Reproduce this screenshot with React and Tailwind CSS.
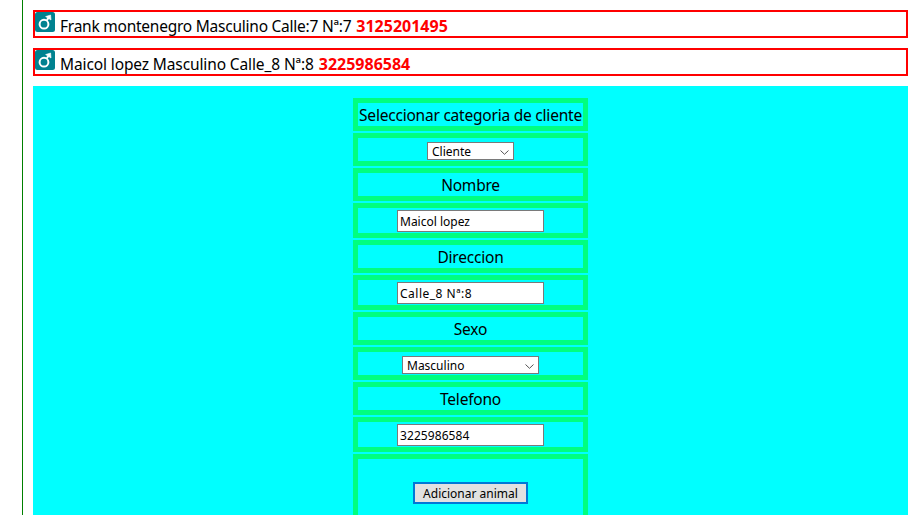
const clients = [
  { info: 'Frank montenegro Masculino Calle:7 Nª:7', phone: '3125201495', tracking: 'tracking-[-0.24px]' },
  { info: 'Maicol lopez Masculino Calle_8 Nª:8', phone: '3225986584', tracking: 'tracking-[-0.12px]' },
];

function MaleIcon() {
  return (
    <svg className="size-5 shrink-0" viewBox="0 0 20 20" fill="none">
      <rect width="20" height="20" rx="2.5" fill="#008290" />
      <circle cx="9" cy="12.2" r="4.4" stroke="white" strokeWidth="2" />
      <path d="M11.8 8.6 13.5 5.8" stroke="white" strokeWidth="2" />
      <path d="M10.6 4.6 15.6 3 16 8Z" fill="white" stroke="white" strokeWidth=".6" />
    </svg>
  );
}

function Client({ info, phone, tracking }) {
  return (
    <div className="flex h-7 border-2 border-[#ff0000] text-[15.5px] leading-[26px] whitespace-pre">
      <MaleIcon />
      <span className={`ml-[5px] pt-px ${tracking}`}>{info}</span>
      <span className="ml-[5px] pt-px text-[16px] font-bold text-[#ff0000]">{phone}</span>
    </div>
  );
}

function Label({ children }) {
  return (
    <div className="flex h-[33px] justify-center border-5 border-[#00ff7f] pt-px text-[15.5px] leading-[23px] tracking-[-0.22px] whitespace-nowrap">
      {children}
    </div>
  );
}

function Field({ value, tracking = 'tracking-normal' }) {
  return (
    <div className="flex h-[35px] justify-center border-5 border-[#00ff7f] pt-0.5">
      <div className={`h-[22px] w-[147px] border border-[#7a7a7a] bg-white pl-0.5 text-[12px] leading-[21px] ${tracking}`}>{value}</div>
    </div>
  );
}

function Select({ value, width }) {
  return (
    <div className="flex h-[33px] justify-center border-5 border-[#00ff7f] pt-1">
      <div className={`flex h-[18px] justify-between border border-[#7a7a7a] bg-white pr-1 pl-1 text-[12px] leading-[18px] ${width}`}>
        <span>{value}</span>
        <svg className="mt-[7px] h-[5px] w-[9px]" viewBox="0 0 9 5" fill="none" stroke="#555">
          <path d="M.5 .5 4.5 4.3 8.5 .5" />
        </svg>
      </div>
    </div>
  );
}

export default function App() {
  return (
    <div className="flex h-[515px] w-[917px] overflow-hidden bg-white pl-[22px] font-['Noto_Sans',sans-serif] text-black">
      <div className="flex w-[886px] flex-col gap-2.5 border-l border-[#008000] pt-2.5 pl-2.5">
        {clients.map((c) => (
          <Client key={c.phone} {...c} />
        ))}
        <div className="flex h-[429px] justify-center bg-[#00ffff] pt-3">
          <div className="flex w-[235px] shrink-0 flex-col gap-0.5">
            <Label>Seleccionar categoria de cliente</Label>
            <Select value="Cliente" width="w-[87px]" />
            <Label>Nombre</Label>
            <Field value="Maicol lopez" />
            <Label>Direccion</Label>
            <Field value="Calle_8 Nª:8" tracking="tracking-[0.5px]" />
            <Label>Sexo</Label>
            <Select value="Masculino" width="w-[137px]" />
            <Label>Telefono</Label>
            <Field value="3225986584" tracking="tracking-[0.08px]" />
            <div className="flex h-[61px] shrink-0 justify-center border-5 border-b-0 border-[#00ff7f] pt-[23px]">
              <button className="h-[22px] w-[115px] border-2 border-[#0078d7] bg-[#e1e1e1] pt-px text-[12px] leading-[17px] whitespace-nowrap">
                Adicionar animal
              </button>
            </div>
          </div>
        </div>
      </div>
    </div>
  );
}
